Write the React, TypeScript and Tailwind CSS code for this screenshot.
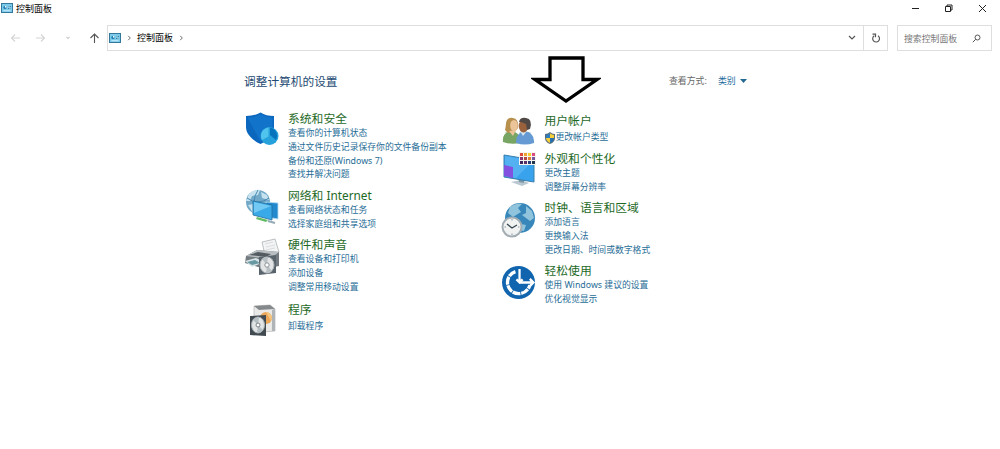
import type { ReactNode } from 'react';

interface Category {
  title: string;
  links: string[];
  icon: ReactNode;
  className: string;
  shield?: boolean;
  linksClass?: string;
}

const PanelIcon = ({ className }: { className?: string }) => (
  <svg viewBox="0 0 12 10" className={className}>
    <rect x="0.5" y="0.5" width="11" height="9" fill="#7ccbea" stroke="#33789a" />
    <circle cx="4" cy="4.5" r="1.7" fill="#2581b5" />
    <path d="M4 4.5V2.8A1.7 1.7 0 0 1 5.7 4.5Z" fill="#fff" />
    <path d="M7 3.5h3M7 5.5h3" stroke="#2d6d92" strokeWidth="0.8" />
    <path d="M2.5 7.7h7M8 3v1.2M9 5v1.2" stroke="#d8f2fb" strokeWidth="0.8" />
  </svg>
);

const SecurityIcon = () => (
  <svg viewBox="0 0 36 36" className="-mt-px size-9">
    <path d="M2 5Q11 5 16.500 1.500Q22 5 30 5V16C30 24 23 30 16.500 33C10 30 2 24 2 16Z" fill="#0b67bd" />
    <path d="M3.500 6.500Q11 6.500 16.500 3Q22 6.500 28.500 6.500V16C28.500 23 22 28 16.500 30.500Z" fill="#1273cb" />
    <circle cx="25.500" cy="25" r="9" fill="#27a1dc" />
    <path d="M24.500 25.500V16.500A8.500 8.500 0 0 0 18 29Z" fill="#50c4ed" />
    <path d="M26 24V16.500A8.500 8.500 0 0 1 32 29Z" fill="#0873bd" />
  </svg>
);

const NetworkIcon = () => (
  <svg viewBox="0 0 36 36" className="size-9">
    <circle cx="14" cy="13" r="12" fill="#73a9c8" />
    <path d="M5 5Q10 0 16 1L14 6L8 7L6 12L2 12ZM17 3L23 6L25 11L18 9ZM4 16L10 15L12 22L9 24Z" fill="#c7e2ee" />
    <path d="M3 9Q14 17 25 9M14 1Q6 13 14 25" fill="none" stroke="#4589b2" />
    <path d="M22 13L34 14V30L22 28Z" fill="#2389ce" stroke="#b8dff2" strokeWidth="0.8" />
    <path d="M9 12L28 16V31L9 26Z" fill="#39a9e7" stroke="#246e9e" strokeWidth="0.8" />
    <path d="M10 13L27 17L10 24Z" fill="#71c9f4" />
    <path d="M13 28L24 31L22 33L12 30Z" fill="#63bb63" />
    <path d="M24 32L31 34" stroke="#94aab5" strokeWidth="2" />
  </svg>
);

const PrinterIcon = () => (
  <svg viewBox="0 0 36 38" className="h-[38px] w-9">
    <path d="M18 4L31 1L35 14L21 17Z" fill="#f2f4f5" stroke="#a2a8ab" strokeWidth="0.7" />
    <path d="M21 6l8-2M22 9l9-2M22 12l9-2" stroke="#d9dddf" />
    <path d="M2 18L13 12L35 14V28L21 31L1 25Z" fill="#737b81" />
    <path d="M2 18L13 12L35 14L26 21Z" fill="#b9bec1" />
    <path d="M5 17L14 14L27 16L22 19Z" fill="#535b61" />
    <path d="M1 23L12 20L20 24L8 29Z" fill="#d7e5e8" />
    <path d="M3 24L11 22L16 25L8 27Z" fill="#6898a2" />
    <path d="M15 19L32 17V35L15 37Z" fill="#59636c" />
    <ellipse cx="23" cy="27" rx="7" ry="8" fill="#e2e4e5" stroke="#aeb3b5" />
    <path d="M23 27L18 21Q21 18 24 19ZM23 27L28 33Q25 36 22 35Z" fill="#b8c0c4" />
    <circle cx="23" cy="27" r="2.200" fill="#fff" stroke="#8a9194" />
  </svg>
);

const ProgramsIcon = () => (
  <svg viewBox="0 0 30 34" className="ml-1 h-[34px] w-[30px]">
    <path d="M6 3L22 2L27 6V28L14 29L6 26Z" fill="#e9eae8" stroke="#b4b5b4" strokeWidth="0.7" />
    <path d="M6 3L22 2L27 6L11 7Z" fill="#85898b" />
    <path d="M24 7L27 6V28L24 28Z" fill="#aeb4b8" />
    <circle cx="18" cy="15" r="6" fill="#eba657" />
    <path d="M18 9A6 6 0 0 1 23 18Z" fill="#f3c682" />
    <path d="M2 13L18 12V33L2 32Z" fill="#414a50" />
    <ellipse cx="10" cy="22" rx="6.500" ry="8" fill="#e1e4e5" stroke="#a5adb0" />
    <path d="M10 22L5 17Q8 14 11 14ZM10 22L15 27Q12 30 9 30Z" fill="#b3bdc2" />
    <circle cx="10" cy="22" r="2" fill="#fff" stroke="#7b8386" />
  </svg>
);

const UsersIcon = () => (
  <svg viewBox="0 0 34 30" className="mt-px ml-px h-[30px] w-[34px]">
    <path d="M1 27Q0 17 9 16Q19 17 18 28Q9 30 1 27Z" fill="#78a563" />
    <path d="M3 15Q4 11 4 8Q5 2 11 3Q17 4 16 13L12 18H6Z" fill="#b8914f" />
    <ellipse cx="12" cy="10.500" rx="3.800" ry="5.500" fill="#ebc49a" />
    <path d="M7 16L11 21L14 15" fill="#ebc49a" />
    <path d="M14 28Q13 18 23 16Q33 18 32 28Q23 31 14 28Z" fill="#659bd2" />
    <path d="M18 16H25L21 21Z" fill="#d6e5ee" />
    <ellipse cx="21.500" cy="11" rx="4.800" ry="6.500" fill="#99623d" />
    <path d="M17 7Q18 2 24 3Q31 4 28 14L25 15L24 9L19 7Z" fill="#4f4845" />
  </svg>
);

const AppearanceIcon = () => (
  <svg viewBox="0 0 36 36" className="-mt-px ml-px size-9">
    <path d="M9 31L19 29L27 32L20 35Z" fill="#b9c8d0" />
    <path d="M16 26L22 27V32L17 31Z" fill="#7e97a7" />
    <path d="M2 4L32 9V31L2 26Z" fill="#38a2ed" stroke="#397fab" />
    <path d="M3 5L31 10L14 27L3 25Z" fill="#62baf3" opacity=".65" />
    <path d="M2 14L11 16V27L2 25Z" fill="#8251df" />
    <rect x="17" y="1" width="17" height="13" fill="#f6f4ee" />
    {['#df4937', '#eea12c', '#f1ce2d', '#da4b80', '#8c356f', '#b24843', '#e27b33', '#77569d', '#40245e', '#593265', '#283b74', '#1f354d'].map((color, i) => (
      <rect key={i} x={18 + (i % 4) * 4} y={2 + Math.floor(i / 4) * 4} width="3" height="3" fill={color} />
    ))}
  </svg>
);

const ClockIcon = () => (
  <svg viewBox="0 0 36 38" className="h-[38px] w-9">
    <circle cx="19" cy="17" r="15" fill="#3787bb" />
    <path d="M9 6Q16 1 21 3L17 7L20 11L12 16L7 12ZM25 5L31 10L33 17L29 20L25 17L21 14L25 12ZM20 23L25 24L23 30L18 29Z" fill="#8fc4dc" />
    <circle cx="11" cy="26" r="9.500" fill="#f1f3f3" stroke="#a2adb3" strokeWidth="2" />
    <path d="M11 18v1.500M11 32.500V34M3.500 26H5M17 26h1.500" stroke="#89949b" />
    <path d="M6 23L11 27L16 24" fill="none" stroke="#3a4750" strokeWidth="1.300" />
  </svg>
);

const AccessIcon = () => (
  <svg viewBox="0 0 34 34" className="mt-px size-[35px]">
    <circle cx="17" cy="17" r="16" fill="#1164ae" />
    <path d="M14 6.400A11 11 0 1 0 28 19.500" fill="none" stroke="#fff" strokeWidth="3.200" strokeDasharray="7.500 .8" />
    <path d="M18 4V17M15 14L18 17L21 14" fill="none" stroke="#fff" strokeWidth="2.200" />
    <path d="M18 17H31M28 13.500L31.500 17L28 20.500" fill="none" stroke="#fff" strokeWidth="2.200" />
  </svg>
);

const ShieldIcon = () => (
  <svg viewBox="0 0 12 12" className="-ml-px size-3 shrink-0">
    <path d="M6 0Q8 2 11 2V6Q11 10 6 12Q1 10 1 6V2Q4 2 6 0Z" fill="#5a6d7c" />
    <path d="M6 1.200V6H2V3Q4 3 6 1.200Z" fill="#2d7dbc" />
    <path d="M6 1.200Q8 3 10 3V6H6Z" fill="#f5ce39" />
    <path d="M2 6H6V11Q2 9 2 6Z" fill="#f5ce39" />
    <path d="M6 6H10Q10 9 6 11Z" fill="#2472b0" />
  </svg>
);

const leftCategories: Category[] = [
  { title: '系统和安全', links: ['查看你的计算机状态', '通过文件历史记录保存你的文件备份副本', '备份和还原(Windows 7)', '查找并解决问题'], icon: <SecurityIcon />, className: 'h-[77px]' },
  { title: '网络和 Internet', links: ['查看网络状态和任务', '选择家庭组和共享选项'], icon: <NetworkIcon />, className: 'h-[49px]' },
  { title: '硬件和声音', links: ['查看设备和打印机', '添加设备', '调整常用移动设置'], icon: <PrinterIcon />, className: 'h-[65px]' },
  { title: '程序', links: ['卸载程序'], icon: <ProgramsIcon />, className: 'h-[40px]', linksClass: 'mt-0.5' }
];

const rightCategories: Category[] = [
  { title: '用户帐户', links: ['更改帐户类型'], icon: <UsersIcon />, className: 'h-[38px]', shield: true, linksClass: 'mt-0.5' },
  { title: '外观和个性化', links: ['更改主题', '调整屏幕分辨率'], icon: <AppearanceIcon />, className: 'h-[49px]' },
  { title: '时钟、语言和区域', links: ['添加语言', '更换输入法', '更改日期、时间或数字格式'], icon: <ClockIcon />, className: 'h-[63px]' },
  { title: '轻松使用', links: ['使用 Windows 建议的设置', '优化视觉显示'], icon: <AccessIcon />, className: 'h-[45px]' }
];

function CategoryItem({ category }: { category: Category }) {
  return (
    <section className={`flex ${category.className}`}>
      <div className="flex h-10 w-[44px] shrink-0 items-start">{category.icon}</div>
      <div>
        <h2 className="-mt-px pb-0.5 text-[11.8px] leading-[14px] text-[#1d691f]">{category.title}</h2>
        <ul className={category.linksClass}>
          {category.links.map((link) => (
            <li key={link} className="flex h-[13.8px] items-center text-[8.82px] leading-[13.8px] text-[#276d96]">
              {category.shield && <ShieldIcon />}
              <a href="#">{link}</a>
            </li>
          ))}
        </ul>
      </div>
    </section>
  );
}

export default function App() {
  return (
    <div className="relative h-[449px] w-[1000px] overflow-hidden bg-white font-['Noto_Sans','Noto_Sans_CJK_SC',sans-serif] whitespace-nowrap text-[#333]">
      <header className="flex h-[25px] justify-between">
        <div className="flex h-4 items-center gap-[3px] pl-px text-[9px] text-black">
          <PanelIcon className="h-[10px] w-3" />
          <span className="pt-px">控制面板</span>
        </div>
        <div className="flex h-4 items-center gap-[24.5px] pr-[13.5px]">
          <svg viewBox="0 0 9 9" className="size-[9px]"><path d="M1 4.500h7" stroke="#222" /></svg>
          <svg viewBox="0 0 9 9" className="size-[9px]" fill="none" stroke="#222"><path d="M1.500 2.500h5v5h-5zM3 2.500V1h5v5H6.500" /></svg>
          <svg viewBox="0 0 9 9" className="size-[9px]" fill="none" stroke="#222"><path d="M1 1l7 7M8 1L1 8" /></svg>
        </div>
      </header>

      <nav className="flex h-[26px] items-stretch">
        <div className="flex w-[107px] items-center pl-[11px]">
          <svg viewBox="0 0 96 12" className="h-3 w-24" fill="none" strokeWidth="1.100">
            <path d="M9 6H1M4 2.500L.5 6L4 9.500M25 6H33.500M30 2.500L33.500 6L30 9.500" stroke="#d4d4d4" />
            <path d="M55.500 5L57 6.500L58.500 5" stroke="#ccc" />
            <path d="M83.500 11V2M79.500 6L83.500 2L87.500 6" stroke="#555" />
          </svg>
        </div>
        <div className="flex w-[781px] border border-[#dedede]">
          <div className="flex flex-1 items-center pl-px text-[9px] text-black">
            <PanelIcon className="h-[10px] w-3" />
            <svg viewBox="0 0 5 7" className="ml-[6px] h-[6px] w-[5px]"><path d="M1 1l2.500 2.500L1 6" fill="none" stroke="#555" /></svg>
            <span className="ml-[5px]">控制面板</span>
            <svg viewBox="0 0 5 7" className="ml-[6px] h-[6px] w-[5px]"><path d="M1 1l2.500 2.500L1 6" fill="none" stroke="#555" /></svg>
          </div>
          <div className="flex w-[22px] items-center justify-center">
            <svg viewBox="0 0 8 6" className="h-[6px] w-2"><path d="M1 1l3 3l3-3" fill="none" stroke="#555" strokeWidth="1.200" /></svg>
          </div>
          <div className="flex w-6 items-center justify-center border-l border-[#dedede]">
            <svg viewBox="0 0 10 10" className="size-[10px]" fill="none" stroke="#555" strokeWidth="1.200"><path d="M7 2.800A3.400 3.400 0 1 1 3.200 2.800M1.500 1.200H4.500v3" /></svg>
          </div>
        </div>
        <div className="ml-[9px] flex w-[95px] items-center justify-between border border-[#dedede] pr-[10px] pl-[6px] text-[8.9px] text-[#777]">
          <span className="pt-px">搜索控制面板</span>
          <svg viewBox="0 0 9 9" className="size-[9px]" fill="none" stroke="#555"><circle cx="5.500" cy="3.500" r="2.500" /><path d="M3.700 5.300L.8 8.200" /></svg>
        </div>
      </nav>

      <main className="pt-[22px] pl-[244px]">
        <div className="flex h-4 items-center">
          <h1 className="w-[425px] text-[11.7px] leading-4 text-[#234a72]">调整计算机的设置</h1>
          <div className="flex items-center text-[8.9px]">
            <span className="w-[49px] text-[#666]">查看方式:</span>
            <a href="#" className="text-[#1e6c9e]">类别</a>
            <svg viewBox="0 0 7 4" className="ml-1 h-1 w-[7px]"><path d="M0 0h7L3.500 4Z" fill="#236991" /></svg>
          </div>
        </div>
        <div className="flex pt-[23px]">
          <div className="w-[256.5px]">
            {leftCategories.map((category) => <CategoryItem key={category.title} category={category} />)}
          </div>
          <div className="pt-0.5">
            {rightCategories.map((category) => <CategoryItem key={category.title} category={category} />)}
          </div>
        </div>
      </main>

      {/* Callout pointing at the user accounts category */}
      <svg viewBox="0 0 70 48" className="absolute top-[55px] left-[531px] h-12 w-[70px]">
        <path d="M19 3H52V24.500H66L35 46L4 24.500H19Z" fill="#fff" stroke="#000" strokeWidth="3.300" />
      </svg>
    </div>
  );
}
